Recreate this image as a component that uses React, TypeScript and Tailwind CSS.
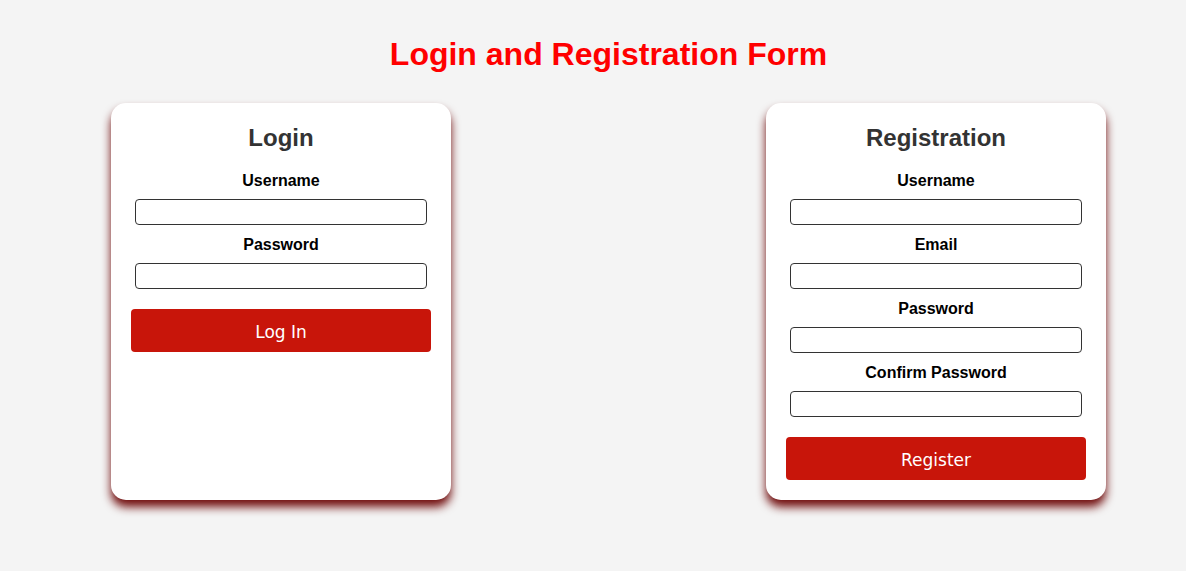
import React from "react";

function Field({ label }: { label: string }) {
  return (
    <div className="flex flex-col items-center">
      <label className="pt-[1px] text-[16px] font-bold leading-[18px] text-black">{label}</label>
      <input className="mt-[9px] mb-[10px] h-[26px] w-[292px] rounded-[4px] border border-[#333] bg-white" />
    </div>
  );
}

function Card({ title, fields, button }: { title: string; fields: string[]; button: string }) {
  return (
    <div className="flex w-[340px] flex-col items-center rounded-[15px] bg-white p-[20px] shadow-[0_7px_10px_rgba(105,0,0,0.95)]">
      <h2 className="mb-[19px] pt-[1px] text-[24px] font-bold leading-[28px] text-[#333]">{title}</h2>
      {fields.map((f) => (
        <Field key={f} label={f} />
      ))}
      <button
        className="mt-[10px] h-[43px] w-[300px] rounded-[4px] bg-[#c8150a] pt-[4px] text-[17px] text-white"
        style={{ fontFamily: "'DejaVu Sans', Verdana, sans-serif" }}
      >
        {button}
      </button>
    </div>
  );
}

export default function App() {
  return (
    <div
      className="min-h-[571px] w-full bg-[#f4f4f4] pl-[31px]"
      style={{ fontFamily: "'Liberation Sans', Arial, sans-serif" }}
    >
      <h1 className="pt-[36px] text-center text-[32px] font-bold leading-[37px] text-[#ff0000]">
        Login and Registration Form
      </h1>
      <div className="mt-[30px] flex items-stretch justify-center gap-[315px]">
        <Card title="Login" fields={["Username", "Password"]} button="Log In" />
        <Card
          title="Registration"
          fields={["Username", "Email", "Password", "Confirm Password"]}
          button="Register"
        />
      </div>
    </div>
  );
}
